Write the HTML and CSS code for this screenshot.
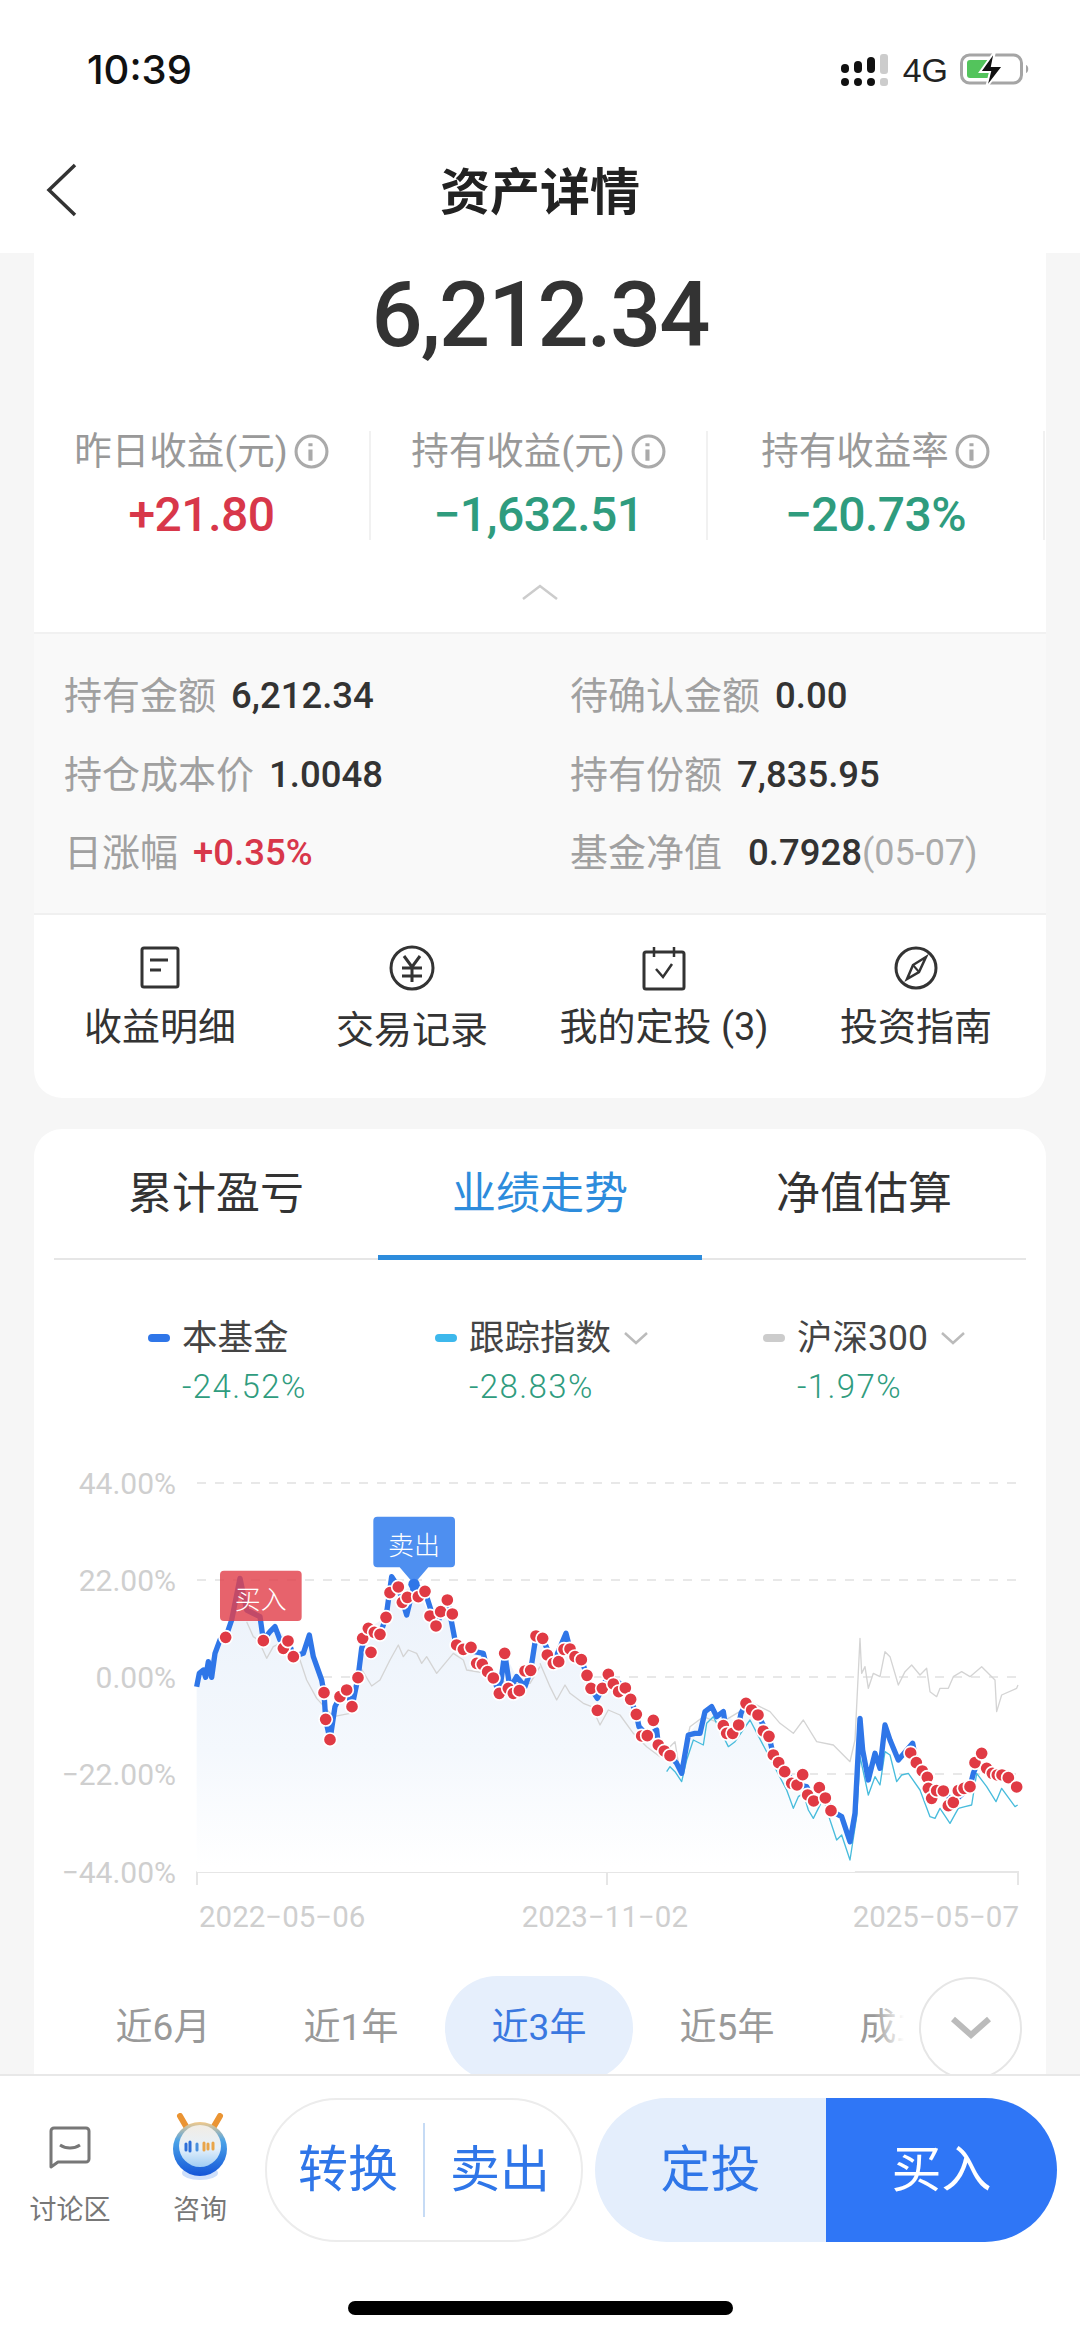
FILE: index.html
```html
<!DOCTYPE html>
<html lang="zh-CN">
<head>
<meta charset="utf-8">
<title>资产详情</title>
<link rel="stylesheet" href="styles.css">
</head>
<body>
<div class="app">
  <header class="header">
    <div class="status">
      <span class="time">10:39</span>
      <div class="status-right">
        <svg class="signal" width="48" height="36" viewBox="0 0 48 36">
          <g fill="#111"><rect x="0" y="10" width="8" height="9" rx="4"/><rect x="13" y="7" width="8" height="12" rx="4"/><rect x="26" y="3" width="8" height="16" rx="4"/><circle cx="4" cy="28" r="4"/><circle cx="17" cy="28" r="4"/><circle cx="30" cy="28" r="4"/></g>
          <g fill="#ccc"><rect x="39" y="0" width="8" height="20" rx="3"/><rect x="39" y="24" width="8" height="8" rx="3"/></g>
        </svg>
        <span class="net">4G</span>
        <svg class="battery" width="72" height="38" viewBox="0 0 72 38">
          <rect x="1.5" y="4" width="60" height="28" rx="8" fill="#fff" stroke="#a5a5a5" stroke-width="3"/>
          <rect x="7" y="9" width="24" height="18" rx="3" fill="#53c45c"/>
          <path d="M66 14c3 1 3 7 0 8z" fill="#a5a5a5"/>
          <path d="M35 0 20 21h10l-4 16 17-22H32z" fill="#111" stroke="#fff" stroke-width="2"/>
        </svg>
      </div>
    </div>
    <div class="nav">
      <svg class="back" width="34" height="54" viewBox="0 0 34 54"><path d="M30 2 4 27l26 25" fill="none" stroke="#333" stroke-width="3.5"/></svg>
      <h1 class="title">资产详情</h1>
    </div>
  </header>

  <main class="main">
    <section class="card summary">
      <div class="total">6,212.34</div>
      <div class="stats">
        <div class="stat">
          <div class="stat-label">昨日收益(元)<svg class="info" width="34" height="34" viewBox="0 0 34 34"><circle cx="17" cy="17" r="15" fill="none" stroke="#aaa" stroke-width="3"/><path d="M14 9h4v3h-4zM14 15h4v11h-4z" fill="#aaa"/></svg></div>
          <div class="stat-value up">+21.80</div>
        </div>
        <div class="stat">
          <div class="stat-label">持有收益(元)<svg class="info" width="34" height="34" viewBox="0 0 34 34"><circle cx="17" cy="17" r="15" fill="none" stroke="#aaa" stroke-width="3"/><path d="M14 9h4v3h-4zM14 15h4v11h-4z" fill="#aaa"/></svg></div>
          <div class="stat-value down">−1,632.51</div>
        </div>
        <div class="stat">
          <div class="stat-label">持有收益率<svg class="info" width="34" height="34" viewBox="0 0 34 34"><circle cx="17" cy="17" r="15" fill="none" stroke="#aaa" stroke-width="3"/><path d="M14 9h4v3h-4zM14 15h4v11h-4z" fill="#aaa"/></svg></div>
          <div class="stat-value down">−20.73%</div>
        </div>
      </div>
      <div class="fold">
        <svg class="fold-arrow" width="36" height="16" viewBox="0 0 36 16"><path d="M1 15 18 2l17 13" fill="none" stroke="#ccc" stroke-width="2.5"/></svg>
        <svg class="fold-notch" width="36" height="20" viewBox="0 0 36 20"><path d="M0 20 C8 20 12 14 18 1 C24 14 28 20 36 20z" fill="#fff"/></svg>
      </div>
      <div class="detail">
        <div class="detail-item"><span class="k">持有金额</span><span class="v">6,212.34</span></div>
        <div class="detail-item"><span class="k">待确认金额</span><span class="v">0.00</span></div>
        <div class="detail-item"><span class="k">持仓成本价</span><span class="v">1.0048</span></div>
        <div class="detail-item"><span class="k">持有份额</span><span class="v">7,835.95</span></div>
        <div class="detail-item"><span class="k">日涨幅</span><span class="v up">+0.35%</span></div>
        <div class="detail-item"><span class="k">基金净值</span><span class="v v-wide">0.7928</span><span class="date">(05-07)</span></div>
      </div>
      <nav class="actions">
        <a class="action">
          <svg class="action-icon" width="46" height="46" viewBox="0 0 46 46"><rect x="5" y="3" width="36" height="39" rx="2" fill="none" stroke="#333" stroke-width="3"/><path d="M13 15h18M13 25h11" stroke="#333" stroke-width="3"/></svg>
          <span>收益明细</span>
        </a>
        <a class="action action-low">
          <svg class="action-icon" width="46" height="46" viewBox="0 0 46 46"><circle cx="23" cy="23" r="21" fill="none" stroke="#333" stroke-width="3"/><path d="M15 11l8 11 8-11M13 23h20M13 31h20M23 22v15" fill="none" stroke="#333" stroke-width="3"/></svg>
          <span>交易记录</span>
        </a>
        <a class="action">
          <svg class="action-icon" width="46" height="46" viewBox="0 0 46 46"><rect x="3" y="7" width="40" height="37" rx="2" fill="none" stroke="#333" stroke-width="3"/><path d="M13 2v10M33 2v10M15 24l7 8 9-13" fill="none" stroke="#333" stroke-width="2.5"/></svg>
          <span>我的定投 (3)</span>
        </a>
        <a class="action">
          <svg class="action-icon" width="46" height="46" viewBox="0 0 46 46"><circle cx="23" cy="23" r="20" fill="none" stroke="#333" stroke-width="3"/><path d="M33 12 26 27 14 34l6-14z" fill="none" stroke="#333" stroke-width="2.5"/><path d="M20 20l6 7" stroke="#333" stroke-width="2"/></svg>
          <span>投资指南</span>
        </a>
      </nav>
    </section>

    <section class="card perf">
      <div class="tabs">
        <div class="tab">累计盈亏</div>
        <div class="tab tab-active">业绩走势</div>
        <div class="tab">净值估算</div>
      </div>
      <div class="legend">
        <div class="legend-item">
          <div class="legend-name"><i class="dash dash-blue"></i>本基金</div>
          <div class="legend-value">-24.52%</div>
        </div>
        <div class="legend-item">
          <div class="legend-name"><i class="dash dash-teal"></i>跟踪指数<svg class="legend-caret" width="26" height="14" viewBox="0 0 26 14"><path d="M2 2l11 10L24 2" fill="none" stroke="#bbb" stroke-width="2.5"/></svg></div>
          <div class="legend-value">-28.83%</div>
        </div>
        <div class="legend-item">
          <div class="legend-name"><i class="dash dash-grey"></i>沪深300<svg class="legend-caret" width="26" height="14" viewBox="0 0 26 14"><path d="M2 2l11 10L24 2" fill="none" stroke="#bbb" stroke-width="2.5"/></svg></div>
          <div class="legend-value">-1.97%</div>
        </div>
      </div>

      <svg class="chart" width="1012" height="553" viewBox="34 1407 1012 553">
        <defs>
          <linearGradient id="areaFill" gradientUnits="userSpaceOnUse" x1="0" y1="500" x2="0" y2="1280">
            <stop offset="0" stop-color="#edf3fb"/>
            <stop offset=".55" stop-color="#f4f8fd"/>
            <stop offset="1" stop-color="#ffffff"/>
          </linearGradient>
        </defs>
        <g class="grid">
          <path d="M197 1483H1018M197 1580H1018M197 1677H1018M197 1774H1018"/>
        </g>
        <path class="axis" d="M197 1885V1872H1018V1885M607 1872V1885"/>
        <g class="y-labels">
          <text x="176" y="1494">44.00%</text>
          <text x="176" y="1591">22.00%</text>
          <text x="176" y="1688">0.00%</text>
          <text x="176" y="1785">−22.00%</text>
          <text x="176" y="1883">−44.00%</text>
        </g>
        <g class="x-labels">
          <text x="199" y="1927">2022−05−06</text>
          <text x="688" y="1927" text-anchor="end">2023−11−02</text>
          <text x="1019" y="1927" text-anchor="end">2025−05−07</text>
        </g>
        <text class="watermark" x="205" y="1838">蚂蚁基金</text>

        <g transform="translate(40 1440) scale(.33333)">
          <polygon fill="url(#areaFill)" points="470,740 490,690 505,665 525,640 540,600 557,592 575,540 600,480 660,530 670,600 705,560 745,600 760,650 790,640 808,585 845,720 857,838 870,899 900,770 936,800 954,713 985,565 1038,532 1055,470 1122,435 1188,558 1222,480 1245,600 1330,640 1378,760 1394,640 1430,710 1472,691 1488,588 1510,596 1510,1296 470,1296"/>
          <polyline class="line-grey" points="620,545 640,590 655,600 680,655 700,620 740,600 780,660 800,720 830,775 880,830 930,820 960,680 995,738 1020,720 1050,660 1075,615 1090,650 1105,630 1130,640 1145,670 1160,650 1190,700 1215,670 1240,640 1270,660 1280,690 1340,700 1380,720 1400,730 1470,730 1500,680"/>
          <polyline class="line-blue" points="470,740 478,700 490,690 497,712 505,665 515,712 525,640 540,600 557,592 575,540 600,415 620,510 660,530 670,600 690,575 705,560 720,600 745,600 760,650 790,640 808,585 820,650 845,720 852,758 857,838 870,899 885,800 900,770 920,750 936,800 954,713 965,625 985,565 1003,577 1020,583 1038,532 1055,410 1075,441 1100,525 1122,435 1155,454 1188,558 1222,480 1245,600 1270,628 1330,640 1343,695 1360,714 1378,760 1394,640 1410,745 1430,710 1455,740 1472,691 1488,588 1506,596"/>
          <g>
            <circle class="dot" cx="557" cy="592" r="20"/><circle class="dot" cx="670" cy="602" r="20"/><circle class="dot" cx="730" cy="625" r="20"/><circle class="dot" cx="744" cy="603" r="20"/><circle class="dot" cx="760" cy="650" r="20"/><circle class="dot" cx="852" cy="758" r="20"/><circle class="dot" cx="857" cy="838" r="20"/><circle class="dot" cx="870" cy="899" r="20"/><circle class="dot" cx="900" cy="770" r="20"/><circle class="dot" cx="920" cy="750" r="20"/><circle class="dot" cx="936" cy="800" r="20"/><circle class="dot" cx="954" cy="713" r="20"/><circle class="dot" cx="968" cy="595" r="20"/><circle class="dot" cx="985" cy="565" r="20"/><circle class="dot" cx="1003" cy="577" r="20"/><circle class="dot" cx="1020" cy="583" r="20"/><circle class="dot" cx="993" cy="637" r="20"/><circle class="dot" cx="1038" cy="532" r="20"/><circle class="dot" cx="1050" cy="458" r="20"/><circle class="dot" cx="1075" cy="441" r="20"/><circle class="dot" cx="1087" cy="487" r="20"/><circle class="dot" cx="1102" cy="472" r="20"/><circle class="dot" cx="1135" cy="470" r="20"/><circle class="dot" cx="1155" cy="454" r="20"/><circle class="dot" cx="1170" cy="528" r="20"/><circle class="dot" cx="1188" cy="558" r="20"/><circle class="dot" cx="1202" cy="515" r="20"/><circle class="dot" cx="1222" cy="480" r="20"/><circle class="dot" cx="1237" cy="522" r="20"/><circle class="dot" cx="1250" cy="615" r="20"/><circle class="dot" cx="1270" cy="628" r="20"/><circle class="dot" cx="1293" cy="622" r="20"/><circle class="dot" cx="1310" cy="670" r="20"/><circle class="dot" cx="1327" cy="673" r="20"/><circle class="dot" cx="1343" cy="695" r="20"/><circle class="dot" cx="1360" cy="714" r="20"/><circle class="dot" cx="1378" cy="760" r="20"/><circle class="dot" cx="1394" cy="640" r="20"/><circle class="dot" cx="1405" cy="745" r="20"/><circle class="dot" cx="1420" cy="760" r="20"/><circle class="dot" cx="1438" cy="752" r="20"/><circle class="dot" cx="1455" cy="693" r="20"/><circle class="dot" cx="1472" cy="691" r="20"/><circle class="dot" cx="1488" cy="588" r="20"/>
          </g>
          <rect class="tag-buy" x="540" y="392" width="245" height="151" rx="12"/>
          <text class="tag-text" x="662" y="507" text-anchor="middle">买入</text>
          <path class="tag-sell" d="M1012 230h221a12 12 0 0 1 12 12v128a12 12 0 0 1-12 12h-68l-43 50-43-50h-67a12 12 0 0 1-12-12V242a12 12 0 0 1 12-12z"/>
          <circle cx="1122" cy="433" r="17" fill="#2f76e8"/>
          <text class="tag-text" x="1122" y="345" text-anchor="middle">卖出</text>
        </g>

        <g transform="translate(540 1440) scale(.33333)">
          <polygon fill="url(#areaFill)" points="8,595 40,670 78,580 124,659 153,745 187,745 205,703 256,744 289,823 322,887 390,947 425,1000 445,885 495,815 550,815 596,855 618,790 654,825 687,889 734,995 771,1035 873,1112 930,1205 945,1296 8,1296"/>
          <polyline class="line-grey" points="0,670 30,740 50,780 75,735 90,760 130,790 155,800 180,855 205,810 240,825 280,880 320,920 360,950 405,905 420,1000 450,860 490,830 540,850 590,820 640,790 690,815 720,850 760,880 790,840 830,905 880,915 930,965 945,900 960,595 965,700 975,680 985,745 1000,700 1020,710 1035,635 1050,650 1075,735 1095,695 1115,675 1140,705 1160,685 1170,755 1190,770 1200,745 1225,745 1240,710 1265,695 1290,710 1325,680 1365,720 1370,815 1385,765 1430,745 1434,735"/>
          <polyline class="line-teal" points="380,995 390,980 405,995 425,1025 440,960 460,900 490,915 500,850 520,830 565,920 585,905 630,840 740,1050 760,1105 775,1070 790,1060 805,1110 820,1135 835,1105 850,1075 870,1140 890,1200 905,1185 930,1260 950,1130 960,950 985,1065 1005,1010 1020,1035 1035,935 1050,945 1070,1025 1085,1005 1105,1000 1140,1050 1170,1130 1185,1135 1200,1105 1230,1150 1255,1105 1275,1100 1295,1095 1310,1000 1340,1040 1368,1085 1385,1045 1425,1100 1433,1095"/>
          <polyline class="line-blue" points="8,595 40,670 78,580 90,627 124,659 141,706 153,745 172,775 187,745 205,703 256,744 272,778 289,823 297,860 322,887 350,870 355,915 390,947 410,970 425,1000 445,885 465,880 480,880 495,815 515,800 530,830 550,815 560,880 596,855 603,820 618,790 654,825 687,889 700,945 734,995 771,1035 800,1040 821,1083 856,1074 873,1112 905,1130 930,1205 945,1120 960,835 968,930 985,1020 1005,940 1020,985 1035,855 1050,900 1075,960 1118,910 1129,968 1162,1012 1175,1075 1210,1053 1240,1087 1290,1040 1300,1000 1325,940"/>
          <g>
            <circle class="dot" cx="8" cy="595" r="20"/><circle class="dot" cx="22" cy="645" r="20"/><circle class="dot" cx="40" cy="670" r="20"/><circle class="dot" cx="56" cy="665" r="20"/><circle class="dot" cx="72" cy="628" r="20"/><circle class="dot" cx="90" cy="627" r="20"/><circle class="dot" cx="105" cy="650" r="20"/><circle class="dot" cx="124" cy="659" r="20"/><circle class="dot" cx="141" cy="706" r="20"/><circle class="dot" cx="153" cy="745" r="20"/><circle class="dot" cx="172" cy="811" r="20"/><circle class="dot" cx="187" cy="745" r="20"/><circle class="dot" cx="205" cy="703" r="20"/><circle class="dot" cx="220" cy="732" r="20"/><circle class="dot" cx="236" cy="755" r="20"/><circle class="dot" cx="256" cy="744" r="20"/><circle class="dot" cx="272" cy="778" r="20"/><circle class="dot" cx="289" cy="823" r="20"/><circle class="dot" cx="340" cy="841" r="20"/><circle class="dot" cx="305" cy="888" r="20"/><circle class="dot" cx="322" cy="887" r="20"/><circle class="dot" cx="355" cy="915" r="20"/><circle class="dot" cx="373" cy="933" r="20"/><circle class="dot" cx="390" cy="947" r="20"/><circle class="dot" cx="550" cy="857" r="20"/><circle class="dot" cx="560" cy="880" r="20"/><circle class="dot" cx="578" cy="880" r="20"/><circle class="dot" cx="596" cy="855" r="20"/><circle class="dot" cx="618" cy="790" r="20"/><circle class="dot" cx="635" cy="810" r="20"/><circle class="dot" cx="654" cy="825" r="20"/><circle class="dot" cx="670" cy="873" r="20"/><circle class="dot" cx="687" cy="889" r="20"/><circle class="dot" cx="700" cy="945" r="20"/><circle class="dot" cx="716" cy="968" r="20"/><circle class="dot" cx="734" cy="995" r="20"/><circle class="dot" cx="755" cy="1030" r="20"/><circle class="dot" cx="771" cy="1035" r="20"/><circle class="dot" cx="788" cy="1004" r="20"/><circle class="dot" cx="803" cy="1065" r="20"/><circle class="dot" cx="821" cy="1083" r="20"/><circle class="dot" cx="838" cy="1043" r="20"/><circle class="dot" cx="856" cy="1074" r="20"/><circle class="dot" cx="873" cy="1112" r="20"/><circle class="dot" cx="1112" cy="939" r="20"/><circle class="dot" cx="1129" cy="968" r="20"/><circle class="dot" cx="1147" cy="993" r="20"/><circle class="dot" cx="1162" cy="1012" r="20"/><circle class="dot" cx="1165" cy="1045" r="20"/><circle class="dot" cx="1175" cy="1075" r="20"/><circle class="dot" cx="1190" cy="1052" r="20"/><circle class="dot" cx="1210" cy="1053" r="20"/><circle class="dot" cx="1225" cy="1097" r="20"/><circle class="dot" cx="1240" cy="1087" r="20"/><circle class="dot" cx="1255" cy="1052" r="20"/><circle class="dot" cx="1272" cy="1045" r="20"/><circle class="dot" cx="1290" cy="1040" r="20"/><circle class="dot" cx="1305" cy="968" r="20"/><circle class="dot" cx="1325" cy="940" r="20"/><circle class="dot" cx="1340" cy="985" r="20"/><circle class="dot" cx="1357" cy="1000" r="20"/><circle class="dot" cx="1372" cy="1005" r="20"/><circle class="dot" cx="1386" cy="1005" r="20"/><circle class="dot" cx="1405" cy="1013" r="20"/><circle class="dot" cx="1430" cy="1041" r="20"/>
          </g>
        </g>
      </svg>

      <div class="ranges">
        <div class="range">近6月</div>
        <div class="range">近1年</div>
        <div class="range range-active">近3年</div>
        <div class="range">近5年</div>
        <div class="range">成立来</div>
        <div class="range-fade"></div>
        <div class="range-more"><svg width="42" height="26" viewBox="0 0 42 26"><path d="M3 3l18 16L39 3" fill="none" stroke="#bbb" stroke-width="6"/></svg></div>
      </div>
    </section>
  </main>

  <footer class="bottom">
    <div class="bottom-row">
      <a class="tool">
        <span class="tool-icon">
          <svg width="44" height="46" viewBox="0 0 44 46"><path d="M3 42V6a3 3 0 0 1 3-3h32a3 3 0 0 1 3 3v28a3 3 0 0 1-3 3H10z" fill="none" stroke="#777" stroke-width="3" stroke-linejoin="round"/><path d="M12 20c6 4 14 4 20 0" fill="none" stroke="#777" stroke-width="3"/></svg>
        </span>
        <span class="tool-text">讨论区</span>
      </a>
      <a class="tool">
        <span class="tool-icon">
          <svg width="66" height="70" viewBox="0 0 66 70">
            <defs>
              <linearGradient id="ring" x1="0" y1="0" x2="0" y2="1"><stop offset="0" stop-color="#f2c98a"/><stop offset=".35" stop-color="#4aa3e8"/><stop offset="1" stop-color="#1455d8"/></linearGradient>
              <linearGradient id="face" x1="0" y1="0" x2="0" y2="1"><stop offset="0" stop-color="#f1ece4"/><stop offset=".55" stop-color="#e6f1fb"/><stop offset="1" stop-color="#9fcdf4"/></linearGradient>
            </defs>
            <ellipse cx="33" cy="60" rx="18" ry="7" fill="#cfe0fb"/>
            <path d="M13 3l7 12M53 3l-7 12" stroke="#ea9433" stroke-width="6" stroke-linecap="round"/>
            <circle cx="33" cy="36" r="27" fill="url(#ring)"/>
            <circle cx="33" cy="33" r="21" fill="url(#face)"/>
            <g stroke-width="3" stroke-linecap="round"><path d="M19 31v6M23 29v9" stroke="#2d6fd8"/><path d="M30 31v6" stroke="#4a90dc"/><path d="M37 30v7M41 31v5" stroke="#e9a54a"/><path d="M46 30v6" stroke="#e9a54a"/></g>
          </svg>
        </span>
        <span class="tool-text">咨询</span>
      </a>
      <div class="pair">
        <a class="pair-btn">转换</a>
        <i class="pair-sep"></i>
        <a class="pair-btn">卖出</a>
      </div>
      <div class="buy">
        <a class="buy-btn buy-plan">定投</a>
        <a class="buy-btn buy-now">买入</a>
      </div>
    </div>
    <div class="home"></div>
  </footer>
</div>
</body>
</html>
```
FILE: styles.css
```css
* { box-sizing: border-box; }
html, body { margin: 0; padding: 0; }
body {
  width: 1080px;
  height: 2337px;
  overflow: hidden;
  background: #f6f6f6;
  font-family: Roboto, "Noto Sans CJK SC", sans-serif;
  color: #333;
}
.app { width: 1080px; height: 2337px; display: flex; flex-direction: column; }

/* Header */
.header { height: 253px; flex: none; background: #fff; }
.status { height: 130px; padding: 46px 48px 0 87px; display: flex; justify-content: space-between; align-items: flex-start; }
.time { font: 500 40px/48px Inter, "Liberation Sans", sans-serif; color: #111; letter-spacing: 0; }
.status-right { display: flex; align-items: center; gap: 14px; height: 48px; margin-top: 0; }
.signal { margin-top: 3px; }
.net { font: 400 34px/48px "Liberation Sans", sans-serif; color: #222; }
.battery { margin-left: -2px; }
.nav { height: 123px; display: flex; align-items: center; justify-content: center; position: relative; padding-bottom: 7px; }
.back { position: absolute; left: 45px; top: 33px; }
.title { margin: 0; font: 700 50px/70px "Noto Sans CJK SC", sans-serif; color: #222; }

/* Main */
.main { flex: 1; min-height: 0; overflow: hidden; padding: 0 34px; }
.card { background: #fff; width: 1012px; }
.summary { border-radius: 0 0 28px 28px; overflow: hidden; }
.total { height: 124px; text-align: center; font-size: 90px; line-height: 126px; font-weight: 500; color: #333; letter-spacing: -1.9px; }
.stats { display: grid; grid-template-columns: repeat(3, 337px); margin-top: 54px; height: 109px; }
.stat { text-align: center; border-right: 2px solid #f1f1f1; }
.stat-label { height: 40px; font-size: 37.5px; line-height: 40px; color: #999; display: flex; align-items: center; justify-content: center; gap: 6px; }
.info { width: 35px; height: 35px; }
.stat-value { margin-top: 19px; font-size: 48px; line-height: 50px; font-weight: 500; letter-spacing: -.5px; }
.up { color: #d8374a; }
.down { color: #2f9c7e; }
.fold { height: 92px; position: relative; }
.fold-arrow { position: absolute; left: 488px; top: 44px; }
.fold-notch { position: absolute; left: 488px; bottom: 0; }
.detail { height: 283px; background: #f9f9f9; border-top: 2px solid #f1f1f1; border-bottom: 2px solid #f0f0f0; padding: 37px 30px 0; display: grid; grid-template-columns: 506px 1fr; grid-auto-rows: 50px; row-gap: 28.5px; }
.detail-item { display: flex; align-items: center; font-size: 38px; line-height: 50px; }
.k { color: #a0a0a0; }
.v { margin-left: 15px; font-size: 36.5px; font-weight: 500; color: #333; }
.v.up { color: #d8374a; }
.v-wide { margin-left: 26px; }
.date { color: #aaa; font-size: 36px; }
.actions { height: 183px; display: grid; grid-template-columns: repeat(4, 252px); padding-top: 30px; }
.action { display: flex; flex-direction: column; align-items: center; font-size: 38px; line-height: 44px; color: #333; gap: 14px; }
.action-icon { display: block; }
.action-low span { margin-top: 3px; }

/* Performance */
.perf { margin-top: 31px; border-radius: 28px 28px 0 0; height: 960px; position: relative; }
.tabs { height: 131px; margin: 0 20px; display: grid; grid-template-columns: repeat(3, 324px); border-bottom: 2px solid #e6e6e6; }
.tab { padding-top: 37px; text-align: center; font-size: 44px; line-height: 56px; color: #333; height: 131px; }
.tab-active { color: #2d8cdc; border-bottom: 5px solid #2d8cdc; }
.legend { display: grid; grid-template-columns: 287px 328px auto; padding: 56px 0 0 114px; height: 147px; }
.legend-name { display: flex; align-items: center; font-size: 35.5px; line-height: 44px; color: #444; }
.legend-value { margin-top: 7px; padding-left: 34px; font-size: 33px; line-height: 40px; letter-spacing: 1.4px; font-weight: 300; color: #2f9c7e; }
.dash { width: 22px; height: 8px; border-radius: 4px; margin-right: 12px; }
.dash-blue { background: #2f76e8; }
.dash-teal { background: #3db8ec; }
.dash-grey { background: #ccc; }
.legend-caret { margin-left: 12px; }
.chart { display: block; }
.grid path { fill: none; stroke: #e8e8e8; stroke-width: 2; stroke-dasharray: 9 9; }
.axis { fill: none; stroke: #e6e6e6; stroke-width: 2; }
.y-labels text { font-size: 30px; fill: #cfcfcf; text-anchor: end; }
.x-labels text { font-size: 29.5px; fill: #cfcfcf; }
.watermark { font-size: 44px; fill: #e9ebee; font-family: "Noto Sans CJK SC", sans-serif; }
.line-blue { fill: none; stroke: #2f76e8; stroke-width: 16; stroke-linejoin: round; }
.line-teal { fill: none; stroke: #48bcdc; stroke-width: 4; stroke-linejoin: round; }
.line-grey { fill: none; stroke: #d4d4d4; stroke-width: 4; stroke-linejoin: round; }
.dot { fill: #e03a44; stroke: #fff; stroke-width: 5; }
.tag-buy { fill: #e2414c; fill-opacity: .82; }
.tag-sell { fill: #4e8ff0; }
.tag-text { font-size: 78px; fill: #fff; font-family: "Noto Sans CJK SC", sans-serif; font-weight: 300; }
.ranges { display: flex; height: 115px; padding: 16px 0 0 35px; position: relative; overflow: hidden; }
.range { width: 188px; height: 105px; line-height: 104px; text-align: center; font-size: 37px; color: #999; border-radius: 52px; flex: none; }
.range-active { background: #e6effc; color: #3a78e0; }
.range-fade { position: absolute; right: 0; top: 0; bottom: 0; width: 172px; background: linear-gradient(90deg, rgba(255,255,255,0) 0, #fff 30px); }
.range-more { position: absolute; right: 24px; top: 17px; width: 103px; height: 103px; border-radius: 50%; border: 2px solid #e6e6e6; background: #fff; display: flex; align-items: center; justify-content: center; }

/* Bottom */
.bottom { flex: none; height: 263px; background: #fff; border-top: 2px solid #e8e8e8; padding-top: 22px; position: relative; }
.bottom-row { display: flex; height: 144px; padding-left: 20px; }
.tool { width: 115px; margin-top: 15px; display: flex; flex-direction: column; align-items: center; }
.tool:nth-child(1) { width: 100px; margin-right: 30px; }
.tool:nth-child(2) { width: 100px; margin-right: 15px; }
.tool-icon { height: 70px; display: flex; align-items: center; justify-content: center; }
.tool-text { margin-top: 9px; font-size: 27px; line-height: 36px; color: #777; }
.pair { width: 318px; height: 144px; border: 2px solid #ececec; border-radius: 72px; display: flex; align-items: center; justify-content: center; }
.pair-btn { width: 150px; text-align: center; font-size: 50px; line-height: 60px; color: #2f76e8; }
.pair-sep { width: 2px; height: 94px; background: #c6dbf5; flex: none; }
.buy { margin-left: 12px; width: 462px; height: 144px; border-radius: 72px; overflow: hidden; display: flex; }
.buy-btn { width: 231px; text-align: center; font-size: 50px; line-height: 144px; }
.buy-plan { background: #e4eefc; color: #2f76e8; }
.buy-now { background: #2f76f6; color: #fff; }
.home { width: 385px; height: 14px; border-radius: 7px; background: #000; margin: 59px auto 0; }
```
